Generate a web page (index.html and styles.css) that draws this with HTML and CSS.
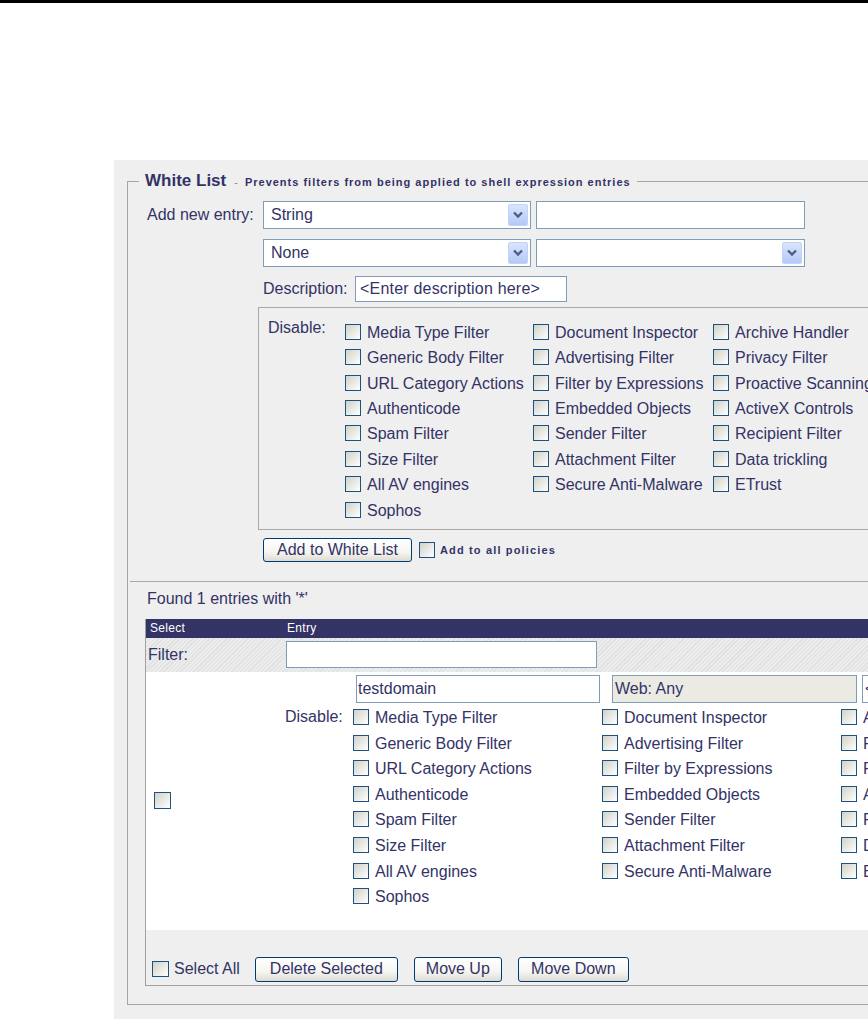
FILE: index.html
```html
<!DOCTYPE html>
<html>
<head>
<meta charset="utf-8">
<title>White List</title>
<link rel="stylesheet" href="styles.css">
</head>
<body>
<div class="topbar"></div>
<div class="panel">
  <fieldset class="wl">
    <legend><span class="lg-title">White List</span><span class="lg-dash">-</span><span class="lg-sub">Prevents filters from being applied to shell expression entries</span></legend>

    <div class="add">
      <div class="add-label">Add new entry:</div>
      <div class="add-controls">
        <div class="ctl-row">
          <div class="sel w268"><span class="sel-text">String</span><span class="dd"><svg width="12" height="8" viewBox="0 0 12 8"><path d="M2 1.5 L6 5.5 L10 1.5" fill="none" stroke="#4a5f86" stroke-width="2.4"/></svg></span></div>
          <div class="inp w269"></div>
        </div>
        <div class="ctl-row">
          <div class="sel w268"><span class="sel-text">None</span><span class="dd"><svg width="12" height="8" viewBox="0 0 12 8"><path d="M2 1.5 L6 5.5 L10 1.5" fill="none" stroke="#4a5f86" stroke-width="2.4"/></svg></span></div>
          <div class="sel w269"><span class="sel-text"></span><span class="dd"><svg width="12" height="8" viewBox="0 0 12 8"><path d="M2 1.5 L6 5.5 L10 1.5" fill="none" stroke="#4a5f86" stroke-width="2.4"/></svg></span></div>
        </div>
        <div class="desc-row">
          <span class="desc-label">Description:</span>
          <div class="inp desc-inp">&lt;Enter description here&gt;</div>
        </div>

        <div class="dis-box">
          <div class="dis-label">Disable:</div>
          <div class="cb-grid up">
            <label class="cbi"><span class="cb"></span>Media Type Filter</label>
            <label class="cbi"><span class="cb"></span>Document Inspector</label>
            <label class="cbi"><span class="cb"></span>Archive Handler</label>
            <label class="cbi"><span class="cb"></span>Generic Body Filter</label>
            <label class="cbi"><span class="cb"></span>Advertising Filter</label>
            <label class="cbi"><span class="cb"></span>Privacy Filter</label>
            <label class="cbi"><span class="cb"></span>URL Category Actions</label>
            <label class="cbi"><span class="cb"></span>Filter by Expressions</label>
            <label class="cbi"><span class="cb"></span>Proactive Scanning</label>
            <label class="cbi"><span class="cb"></span>Authenticode</label>
            <label class="cbi"><span class="cb"></span>Embedded Objects</label>
            <label class="cbi"><span class="cb"></span>ActiveX Controls</label>
            <label class="cbi"><span class="cb"></span>Spam Filter</label>
            <label class="cbi"><span class="cb"></span>Sender Filter</label>
            <label class="cbi"><span class="cb"></span>Recipient Filter</label>
            <label class="cbi"><span class="cb"></span>Size Filter</label>
            <label class="cbi"><span class="cb"></span>Attachment Filter</label>
            <label class="cbi"><span class="cb"></span>Data trickling</label>
            <label class="cbi"><span class="cb"></span>All AV engines</label>
            <label class="cbi"><span class="cb"></span>Secure Anti-Malware</label>
            <label class="cbi"><span class="cb"></span>ETrust</label>
            <label class="cbi"><span class="cb"></span>Sophos</label>
          </div>
        </div>

        <div class="add-row">
          <div class="btn btn-add">Add to White List</div>
          <span class="cb"></span>
          <span class="small-bold">Add to all policies</span>
        </div>
      </div>
    </div>

    <div class="sep"></div>
    <div class="found">Found 1 entries with '*'</div>

    <div class="tbl">
      <div class="th th-sel">Select</div>
      <div class="th th-entry">Entry</div>

      <div class="filter-cell filter-label">Filter:</div>
      <div class="filter-cell"><div class="inp filter-inp"></div></div>

      <div class="entry-sel"><span class="cb"></span></div>
      <div class="entry-cell">
        <div class="entry-inputs">
          <div class="inp e-name">testdomain</div>
          <div class="inp e-web">Web: Any</div>
          <div class="inp e-desc">&lt;Enter description here&gt;</div>
        </div>
        <div class="cb-grid low">
          <div class="dis-label2">Disable:</div>
          <label class="cbi"><span class="cb"></span>Media Type Filter</label>
          <label class="cbi"><span class="cb"></span>Document Inspector</label>
          <label class="cbi"><span class="cb"></span>Archive Handler</label>
          <label class="cbi c1"><span class="cb"></span>Generic Body Filter</label>
          <label class="cbi"><span class="cb"></span>Advertising Filter</label>
          <label class="cbi"><span class="cb"></span>Privacy Filter</label>
          <label class="cbi c1"><span class="cb"></span>URL Category Actions</label>
          <label class="cbi"><span class="cb"></span>Filter by Expressions</label>
          <label class="cbi"><span class="cb"></span>Proactive Scanning</label>
          <label class="cbi c1"><span class="cb"></span>Authenticode</label>
          <label class="cbi"><span class="cb"></span>Embedded Objects</label>
          <label class="cbi"><span class="cb"></span>ActiveX Controls</label>
          <label class="cbi c1"><span class="cb"></span>Spam Filter</label>
          <label class="cbi"><span class="cb"></span>Sender Filter</label>
          <label class="cbi"><span class="cb"></span>Recipient Filter</label>
          <label class="cbi c1"><span class="cb"></span>Size Filter</label>
          <label class="cbi"><span class="cb"></span>Attachment Filter</label>
          <label class="cbi"><span class="cb"></span>Data trickling</label>
          <label class="cbi c1"><span class="cb"></span>All AV engines</label>
          <label class="cbi"><span class="cb"></span>Secure Anti-Malware</label>
          <label class="cbi"><span class="cb"></span>ETrust</label>
          <label class="cbi c1"><span class="cb"></span>Sophos</label>
        </div>
      </div>

      <div class="tbl-foot">
        <span class="cb"></span>
        <span class="sel-all">Select All</span>
        <div class="btn btn-del">Delete Selected</div>
        <div class="btn btn-up">Move Up</div>
        <div class="btn btn-down">Move Down</div>
      </div>
    </div>
  </fieldset>
</div>
</body>
</html>
```

FILE: styles.css
```css
html, body {
  margin: 0;
  padding: 0;
  overflow: hidden;
  background: #ffffff;
}
body {
  width: 868px;
  height: 1019px;
  font-family: "Liberation Sans", Arial, sans-serif;
  font-size: 16px;
  color: #333366;
}
.topbar {
  height: 3px;
  background: #000000;
}
.panel {
  margin: 157px 0 0 114px;
  width: 900px;
  height: 900px;
  background: #efefef;
  padding: 11px 0 0 13px;
  box-sizing: border-box;
}
.wl {
  margin: 0;
  padding: 0;
  border: 1px solid #a5a5a5;
  width: 880px;
  min-width: 0;
  box-sizing: border-box;
}
.wl legend {
  margin-left: 11px;
  padding: 0 6px;
  line-height: 20px;
  height: 20px;
  white-space: nowrap;
}
.lg-title {
  font-size: 17px;
  font-weight: bold;
  color: #333366;
}
.lg-dash {
  font-size: 11px;
  color: #888888;
  margin: 0 7px 0 8px;
}
.lg-sub, .small-bold {
  font-size: 11px;
  font-weight: bold;
  letter-spacing: 1px;
  color: #333366;
}
.small-bold { letter-spacing: 1.15px; }

/* add form */
.add {
  display: grid;
  grid-template-columns: 135px auto;
  margin-top: 10px;
}
.add-label {
  padding-left: 19px;
  line-height: 28px;
}
.ctl-row {
  display: flex;
  gap: 5px;
  margin-bottom: 10px;
}
.sel, .inp {
  box-sizing: border-box;
  border: 1px solid #7f9db9;
  background: #ffffff;
  white-space: nowrap;
  overflow: hidden;
}
.sel {
  height: 28px;
  display: flex;
  align-items: center;
  justify-content: space-between;
  padding: 0 2px 0 7px;
}
.w268 { width: 268px; }
.w269 { width: 269px; }
.inp.w269 { height: 28px; }
.dd {
  width: 20px;
  height: 22px;
  box-sizing: border-box;
  border: 1px solid #c1d2fb;
  border-radius: 2px;
  background: linear-gradient(#d9e4fe, #b5c9f6);
  display: flex;
  align-items: center;
  justify-content: center;
}
.desc-row {
  display: flex;
  align-items: center;
  margin-top: -1px;
}
.desc-label {
  width: 92px;
}
.desc-inp {
  width: 212px;
  height: 26px;
  line-height: 24px;
  padding-left: 4px;
  font-size: 16px;
  letter-spacing: 0.2px;
}

.dis-box {
  margin: 5px 0 0 -5px;
  width: 700px;
  border-top: 1px solid #a8a8a8;
  border-left: 1px solid #a8a8a8;
  border-bottom: 1px solid #a8a8a8;
  display: grid;
  grid-template-columns: 86px auto;
  padding: 12px 0 5px 0;
}
.dis-label {
  padding-left: 9px;
  line-height: 20px;
  margin-top: -2px;
}
.cb-grid {
  display: grid;
  grid-auto-rows: 25.45px;
}
.cb-grid.up {
  grid-template-columns: 188px 180px 220px;
}
.cbi {
  display: flex;
  align-items: center;
  white-space: nowrap;
}
.cb {
  display: inline-block;
  width: 16px;
  height: 16px;
  box-sizing: border-box;
  border: 1px solid #1c5180;
  background: linear-gradient(135deg, #d2d2cb 0%, #e8e8e4 50%, #ffffff 100%);
  flex: none;
}
.cbi .cb {
  margin-right: 6px;
  margin-top: -2px;
}

.add-row {
  display: flex;
  align-items: center;
  margin-top: 8px;
}
.add-row .cb {
  margin: 0 5px 0 7px;
}
.btn {
  box-sizing: border-box;
  height: 24px;
  border: 1px solid #003c74;
  border-radius: 3px;
  background: linear-gradient(#ffffff 0%, #f5f5f1 60%, #dedbd0 100%);
  display: flex;
  align-items: center;
  justify-content: center;
  white-space: nowrap;
  color: #333366;
}
.btn-add { width: 149px; }

.sep {
  margin: 19px 0 0 2px;
  border-top: 1px solid #aaaaaa;
}
.found {
  margin: 7px 0 0 19px;
  line-height: 20px;
}

/* table */
.tbl {
  margin: 10px 0 18px 17px;
  width: 760px;
  border-left: 1px solid #a0a0a0;
  border-bottom: 1px solid #a0a0a0;
  display: grid;
  grid-template-columns: 139px auto;
}
.th {
  background: #333366;
  color: #ffffff;
  font-size: 12px;
  letter-spacing: 0.3px;
  height: 19px;
  line-height: 19px;
}
.th-sel { padding-left: 4px; }
.th-entry { padding-left: 2px; }
.filter-cell {
  height: 34px;
  background: repeating-linear-gradient(135deg, #e0e0e0 0 1px, #ececec 1px 3px);
  display: flex;
  align-items: center;
}
.filter-label { padding-left: 2px; }
.filter-inp {
  width: 311px;
  height: 27px;
  margin-left: 1px;
}
.entry-sel {
  background: #ffffff;
  display: flex;
  align-items: center;
  padding-left: 8px;
}
.entry-sel .cb { width: 17px; height: 17px; }
.entry-cell {
  background: #ffffff;
  padding: 3px 0 20px 0;
}
.entry-inputs {
  display: flex;
  padding-left: 71px;
}
.entry-inputs .inp {
  height: 28px;
  line-height: 26px;
}
.e-name { width: 244px; padding-left: 1px; }
.e-web { width: 245px; margin-left: 12px; padding-left: 2px; background: #ebebe4; }
.e-desc { width: 250px; margin-left: 5px; padding-left: 2px; }
.cb-grid.low {
  margin-top: 3px;
  grid-template-columns: 68px 249px 239px 200px;
  grid-auto-rows: 25.55px;
}
.cb-grid.low .c1 { grid-column: 2; }
.dis-label2 {
  display: flex;
  align-items: center;
  margin-top: -2px;
}
.tbl-foot {
  grid-column: 1 / 3;
  display: flex;
  align-items: center;
  padding: 27px 0 3px 6px;
}
.tbl-foot .cb { width: 17px; height: 16px; }
.sel-all { margin-left: 5px; }
.btn-del { width: 143px; height: 25px; margin-left: 15px; }
.btn-up { width: 88px; height: 25px; margin-left: 16px; }
.btn-down { width: 111px; height: 25px; margin-left: 16px; }
```
